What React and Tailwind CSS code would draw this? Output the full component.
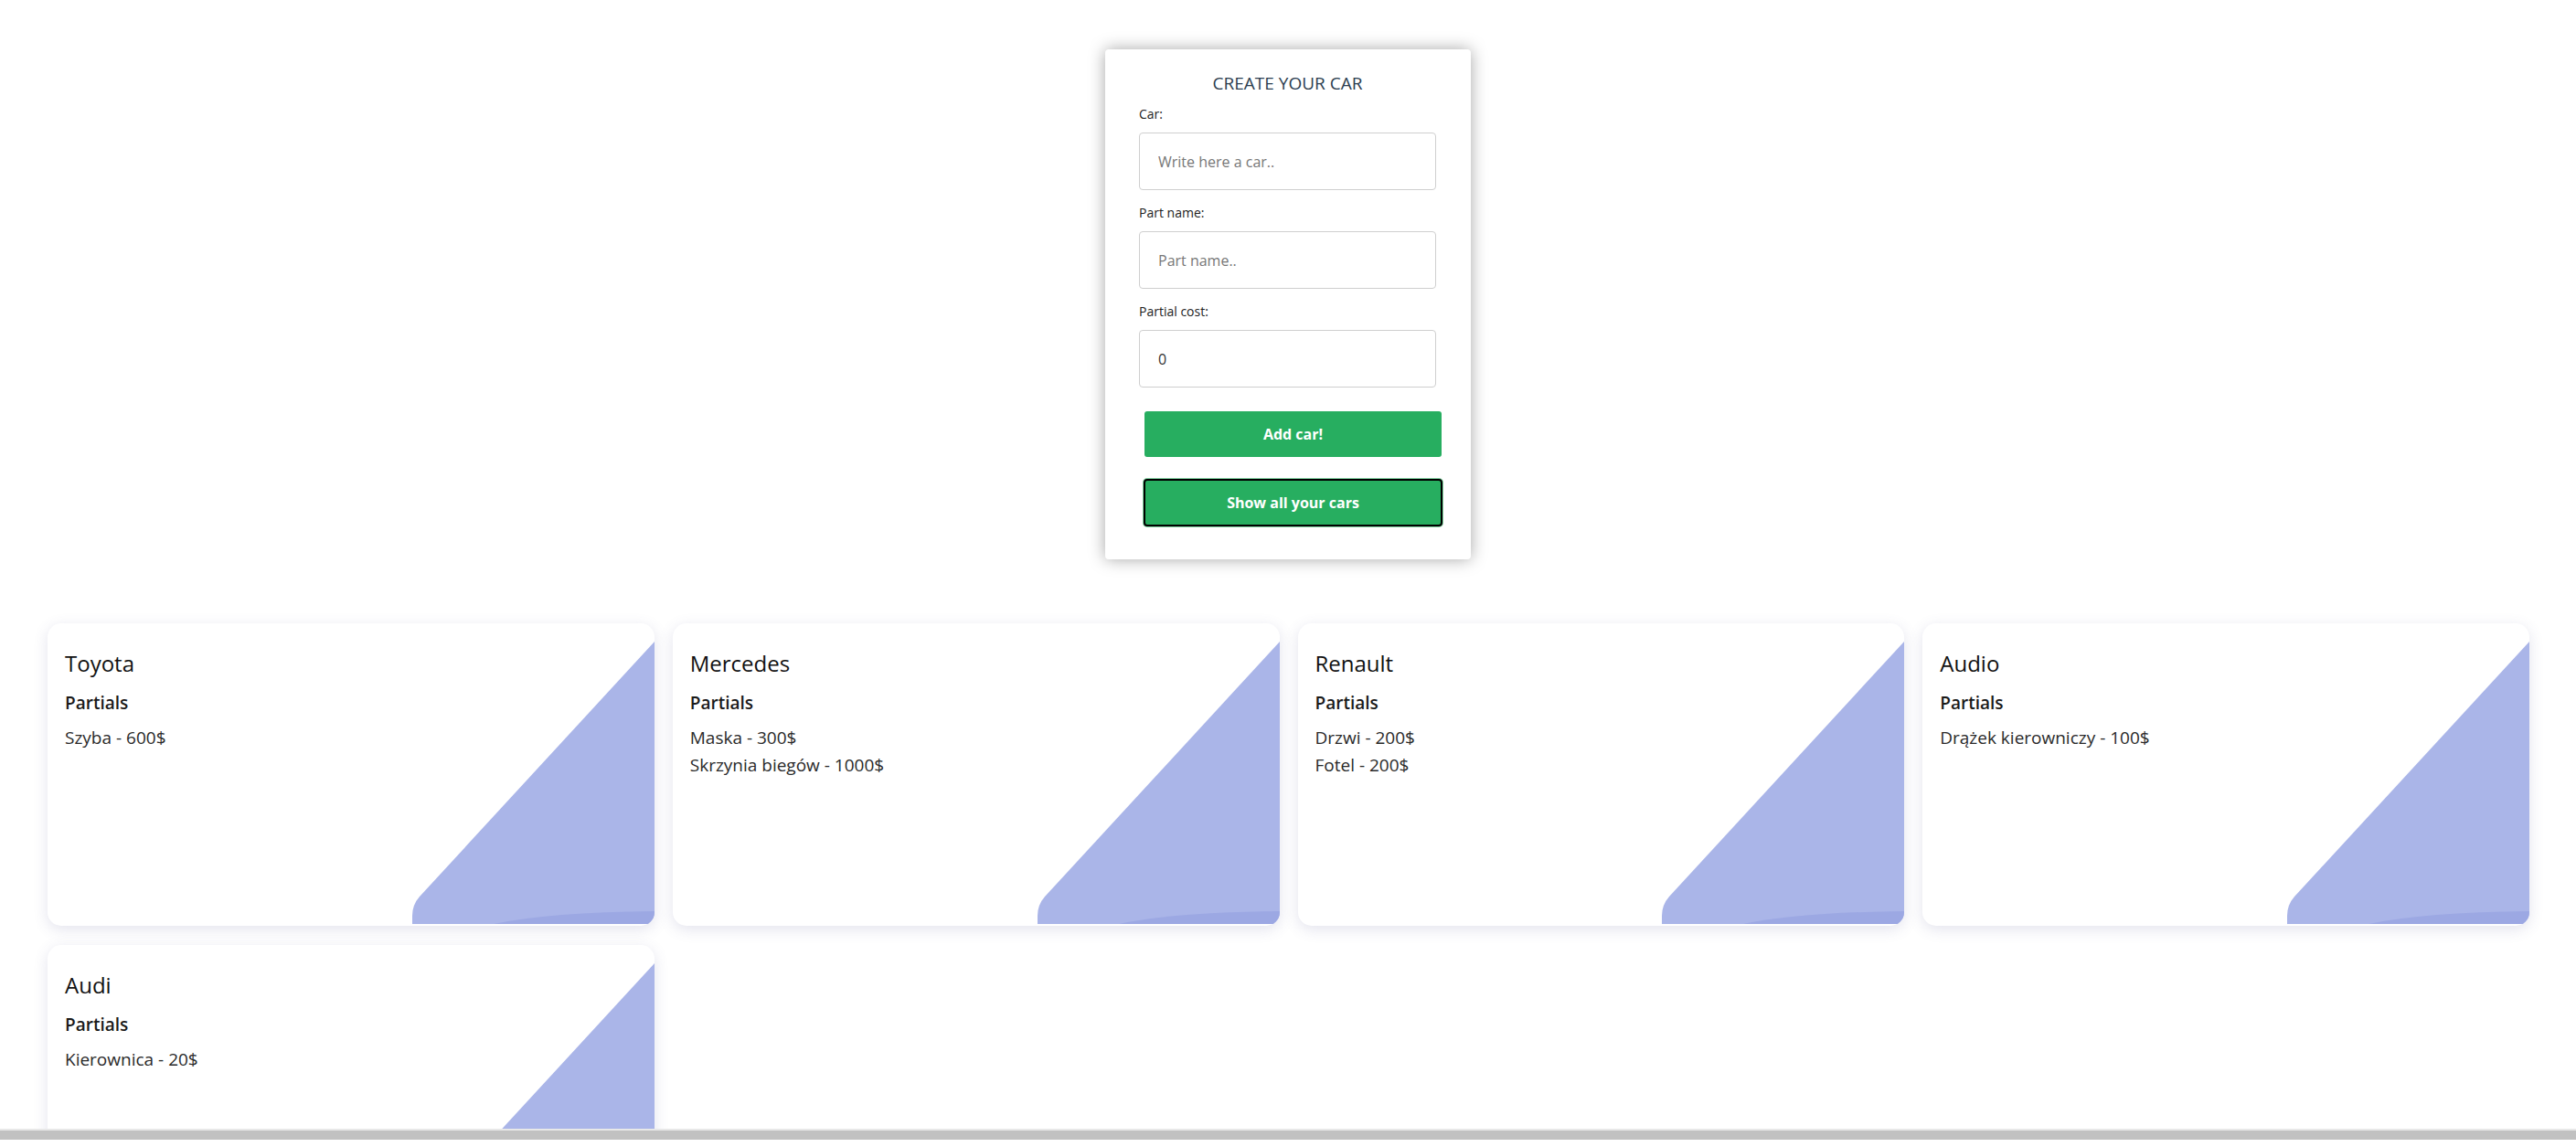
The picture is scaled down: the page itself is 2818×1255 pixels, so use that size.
import { useState } from 'react'

const cars = [
  { id: 1, name: 'Toyota', partials: [{ name: 'Szyba', cost: 600 }] },
  {
    id: 2,
    name: 'Mercedes',
    partials: [
      { name: 'Maska', cost: 300 },
      { name: 'Skrzynia biegów', cost: 1000 },
    ],
  },
  {
    id: 3,
    name: 'Renault',
    partials: [
      { name: 'Drzwi', cost: 200 },
      { name: 'Fotel', cost: 200 },
    ],
  },
  { id: 4, name: 'Audio', partials: [{ name: 'Drążek kierowniczy', cost: 100 }] },
  { id: 5, name: 'Audi', partials: [{ name: 'Kierownica', cost: 20 }] },
]

function CornerShape() {
  return (
    <svg
      className="absolute right-0 bottom-[2px] w-[265px] h-[309px]"
      viewBox="0 0 265 309"
      preserveAspectRatio="none"
    >
      <path d="M265 0 V309 H0 V300 Q0 288 8 279 L265 0 Z" fill="#aab5e8" />
      <path d="M89 309 Q150 296 265 295 V309 Z" fill="#9ca8e3" />
    </svg>
  )
}

function CarCard({ car }) {
  return (
    <div className="relative h-[331px] overflow-hidden rounded-[15px] bg-white shadow-[0_4px_16px_rgba(80,80,140,0.16)]">
      <CornerShape />
      <div className="relative px-[19px] pt-[28px]">
        <h2 className="text-[24px] leading-[32px] font-medium text-[#111]">{car.name}</h2>
        <h3 className="mt-[13px] text-[19px] leading-[28px] font-semibold text-[#1a1a1a]">Partials</h3>
        <ul className="mt-[9px]">
          {car.partials.map((p, i) => (
            <li key={i} className="text-[19px] leading-[30px] text-[#2a2a2a]">
              {p.name} - {p.cost}$
            </li>
          ))}
        </ul>
      </div>
    </div>
  )
}

export default function App() {
  const [car, setCar] = useState('')
  const [part, setPart] = useState('')
  const [cost, setCost] = useState(0)

  return (
    <div className="h-screen flex flex-col overflow-hidden bg-white font-['Open_Sans',sans-serif]">
      <main className="flex-1 overflow-hidden">
        {/* Formularz */}
        <div className="mx-auto mt-[54px] w-[400px] rounded-[4px] bg-white pt-[24px] pb-[36px] pl-[37px] pr-[38px] shadow-[0_0_18px_rgba(0,0,0,0.35)]">
          <h1 className="text-center text-[19px] leading-[26px] font-medium uppercase text-[#2c3e50]">
            Create your car
          </h1>
          <label className="mt-[11px] mb-[10px] block text-[14px] leading-[20px] text-[#222]">Car:</label>
          <input
            type="text"
            value={car}
            onChange={(e) => setCar(e.target.value)}
            placeholder="Write here a car.."
            className="block h-[63px] w-[325px] rounded-[4px] border border-[#cfcfcf] px-[20px] text-[16px] text-[#333] placeholder:text-[#777] outline-none"
          />
          <label className="mt-[15px] mb-[10px] block text-[14px] leading-[20px] text-[#222]">Part name:</label>
          <input
            type="text"
            value={part}
            onChange={(e) => setPart(e.target.value)}
            placeholder="Part name.."
            className="block h-[63px] w-[325px] rounded-[4px] border border-[#cfcfcf] px-[20px] text-[16px] text-[#333] placeholder:text-[#777] outline-none"
          />
          <label className="mt-[15px] mb-[10px] block text-[14px] leading-[20px] text-[#222]">Partial cost:</label>
          <input
            type="number"
            value={cost}
            onChange={(e) => setCost(e.target.value)}
            className="block h-[63px] w-[325px] rounded-[4px] border border-[#cfcfcf] px-[20px] text-[16px] text-[#333] outline-none [appearance:textfield]"
          />
          <button className="mt-[26px] ml-[6px] block h-[50px] w-[325px] rounded-[3px] bg-[#27ae60] text-[16px] font-bold text-white">
            Add car!
          </button>
          <button className="mt-[24px] ml-[5px] block h-[52px] w-[327px] rounded-[4px] border-2 border-black bg-[#27ae60] text-[16px] font-bold text-white shadow-[0_0_0_1px_#7fcf9f]">
            Show all your cars
          </button>
        </div>

        {/* Lista aut */}
        <div className="mt-[70px] grid grid-cols-4 gap-x-[20px] gap-y-[21px] pl-[52px] pr-[51px]">
          {cars.map((c) => (
            <CarCard key={c.id} car={c} />
          ))}
        </div>
      </main>
      <div className="h-[2px] bg-[#e8e8e8]" />
      <div className="h-[10px] bg-[#c1c1c1]" />
      <div className="h-[8px] bg-white" />
    </div>
  )
}
